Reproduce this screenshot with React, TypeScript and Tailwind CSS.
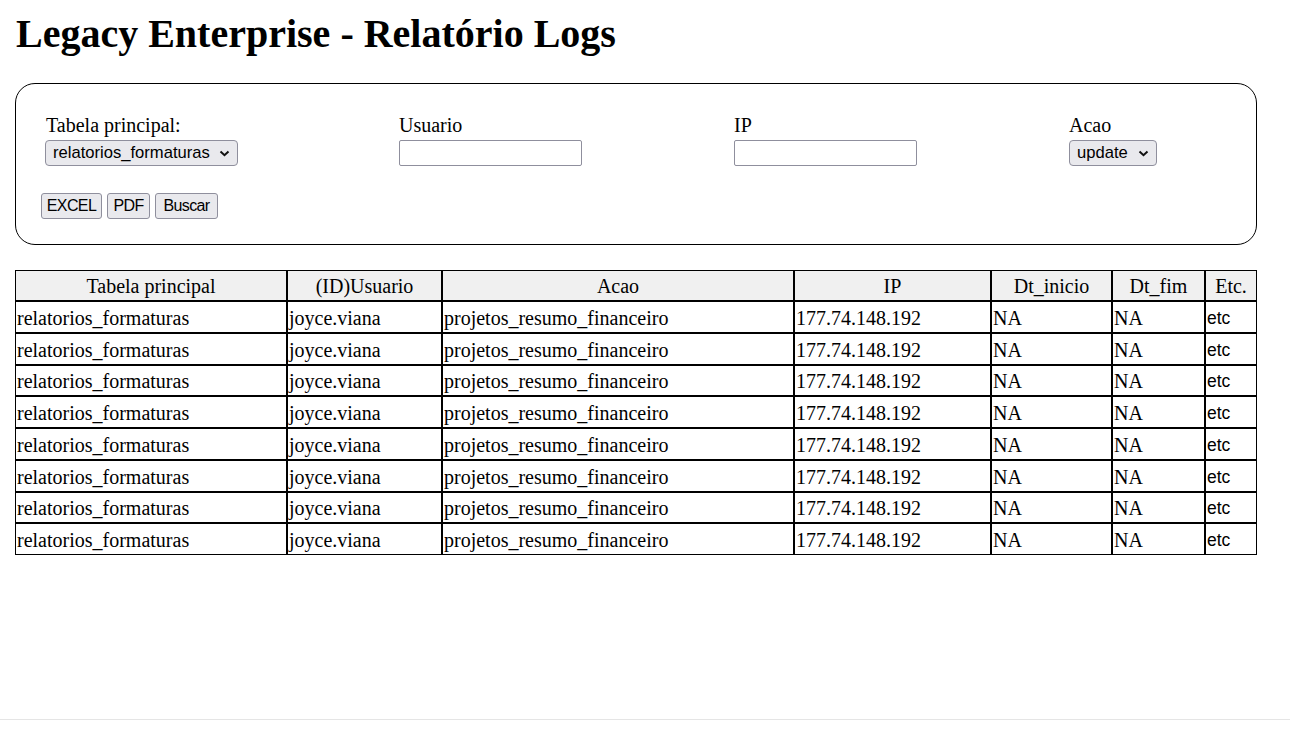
import React from 'react';

const rows = Array.from({ length: 8 }, (_, i) => ({
  id: i,
  tabela: 'relatorios_formaturas',
  usuario: 'joyce.viana',
  acao: 'projetos_resumo_financeiro',
  ip: '177.74.148.192',
  inicio: 'NA',
  fim: 'NA',
  etc: 'etc',
}));

const columns = [
  { label: 'Tabela principal', w: 'w-[270px]' },
  { label: '(ID)Usuario', w: 'w-[155px]' },
  { label: 'Acao', w: 'w-[352px]' },
  { label: 'IP', w: 'w-[197px]' },
  { label: 'Dt_inicio', w: 'w-[121px]' },
  { label: 'Dt_fim', w: 'w-[93px]' },
  { label: 'Etc.', w: 'w-[52px]' },
];

function Chevron() {
  return (
    <svg width="11" height="7" viewBox="0 0 11 7" className="pointer-events-none absolute right-[8px] top-[10px]">
      <path d="M1.5 1.5 L5.5 5.2 L9.5 1.5" fill="none" stroke="#111" strokeWidth="2" />
    </svg>
  );
}

function FakeSelect({ value, width }: { value: string; width: string }) {
  return (
    <div className={`relative ${width}`}>
      <select
        defaultValue={value}
        className="h-[26px] w-full appearance-none rounded-[4px] border border-[#8f8f9d] bg-[#e9e9ed] pl-[7px] pr-[24px] font-['Liberation_Sans',Arial,sans-serif] text-[16.6px] leading-[24px] text-black"
      >
        <option value={value}>{value}</option>
      </select>
      <Chevron />
    </div>
  );
}

function Field({ label, children }: { label: string; children: React.ReactNode }) {
  return (
    <div className="flex flex-col gap-[3px]">
      <label className="text-[20px] leading-[23px]">{label}</label>
      {children}
    </div>
  );
}

export default function App() {
  const btn =
    "h-[26px] rounded-[3px] border border-[#8f8f9d] bg-[#e9e9ed] font-['Liberation_Sans',Arial,sans-serif] text-[16px] tracking-[-0.6px] text-black";

  return (
    <div className="flex h-[732px] flex-col bg-white font-['Liberation_Serif','Times_New_Roman',serif] text-black">
      <div className="h-[719px] px-[15px] pt-[11px]">
        <h1 className="pl-px text-[40px] font-bold leading-[46px]">Legacy Enterprise - Relatório Logs</h1>

        {/* Filtros */}
        <div className="mt-[26px] w-[1242px] rounded-[20px] border border-black px-[30px] pb-[25px] pt-[30px]">
          <div className="grid grid-cols-[353px_335px_335px_1fr]">
            <Field label="Tabela principal:">
              <div className="-ml-px">
                <FakeSelect value="relatorios_formaturas" width="w-[193px]" />
              </div>
            </Field>
            <Field label="Usuario">
              <input className="h-[26px] w-[183px] rounded-[2px] border border-[#8f8f9d] bg-white px-1" />
            </Field>
            <Field label="IP">
              <input className="h-[26px] w-[183px] rounded-[2px] border border-[#8f8f9d] bg-white px-1" />
            </Field>
            <Field label="Acao">
              <FakeSelect value="update" width="w-[88px]" />
            </Field>
          </div>

          <div className="-ml-[5px] mt-[27px] flex gap-[5px]">
            <button className={`${btn} w-[61px]`}>EXCEL</button>
            <button className={`${btn} w-[43px]`}>PDF</button>
            <button className={`${btn} w-[63px]`}>Buscar</button>
          </div>
        </div>

        {/* Tabela */}
        <table className="mt-[25px] w-[1242px] table-fixed border-separate border-spacing-0 border border-black text-[20px]">
          <thead>
            <tr>
              {columns.map((c, i) => (
                <th
                  key={c.label}
                  className={`${c.w} h-[29px] bg-[#f0f0f0] px-px pt-[2px] text-center font-normal leading-[23px] ${i > 0 ? 'border-l-2 border-black' : ''}`}
                >
                  {c.label}
                </th>
              ))}
            </tr>
          </thead>
          <tbody>
            {rows.map((r) => {
              const cells = [r.tabela, r.usuario, r.acao, r.ip, r.inicio, r.fim];
              return (
                <tr key={r.id}>
                  {cells.map((v, i) => (
                    <td
                      key={i}
                      className={`h-[31.75px] border-t-2 border-black px-px pt-[3px] text-left leading-[23px] ${i > 0 ? 'border-l-2' : ''}`}
                    >
                      {v}
                    </td>
                  ))}
                  <td className="h-[31.75px] border-l-2 border-t-2 border-black px-px pt-[3px] font-['Liberation_Sans',Arial,sans-serif] text-[17.5px] leading-[23px]">
                    {r.etc}
                  </td>
                </tr>
              );
            })}
          </tbody>
        </table>
      </div>
      <div className="border-t border-[#e5e5e5]" />
    </div>
  );
}
